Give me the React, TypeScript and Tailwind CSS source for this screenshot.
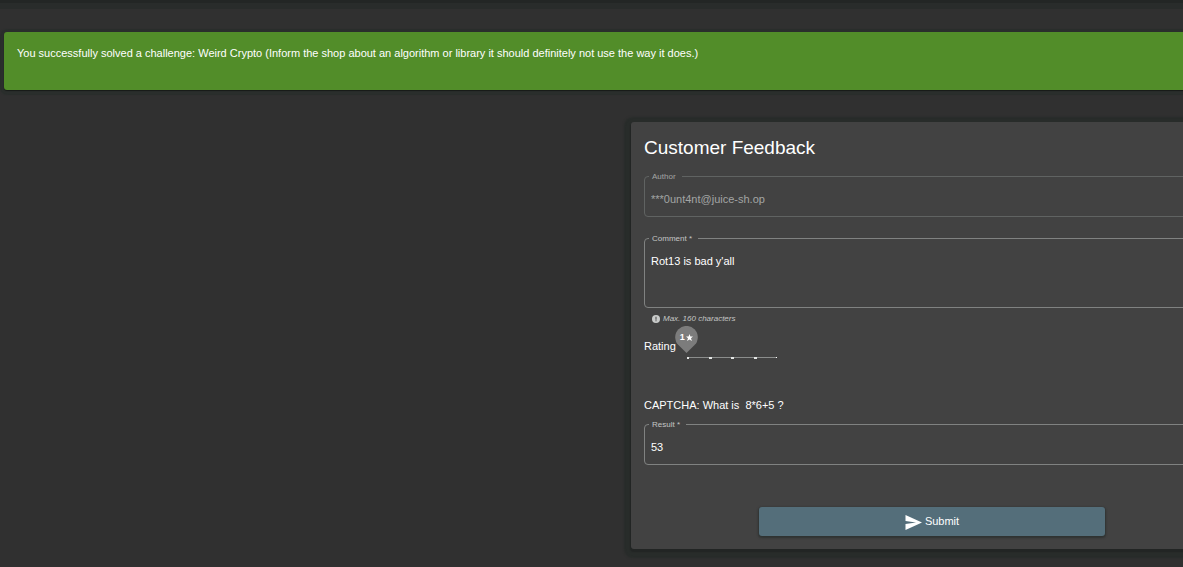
import type { ReactNode } from "react";

type FieldProps = {
  id: string;
  label: string;
  muted?: boolean;
  children: ReactNode;
};

function Field({ id, label, muted, children }: FieldProps) {
  return (
    <fieldset
      className={`min-w-0 rounded border pl-[6px] pr-2 ${muted ? "border-[#606362]" : "border-[#808281]"}`}
    >
      <legend
        className={`-ml-[2px] flex pl-[3px] pr-[6px] pt-[2px] text-[8px] leading-[8px] ${muted ? "text-[#a3a5a4]" : "text-[#c4c6c5]"}`}
      >
        <label htmlFor={id}>{label}</label>
      </legend>
      {children}
    </fieldset>
  );
}

function RatingSlider() {
  return (
    <div className="relative h-8 w-[90px]">
      <svg className="absolute inset-x-0 bottom-0 h-[3px] w-[90px]" viewBox="0 0 90 3" aria-hidden="true">
        <rect x="0" y="1" width="90" height="1" fill="#8b8d8c" />
        <rect x="0" y="1" width="2" height="2" fill="#e4e6e5" />
        <rect x="22" y="1" width="3" height="2" fill="#e4e6e5" />
        <rect x="44" y="1" width="3" height="2" fill="#e4e6e5" />
        <rect x="67" y="1" width="3" height="2" fill="#e4e6e5" />
        <rect x="89" y="1" width="1" height="1" fill="#ffffff" />
      </svg>
      <input
        id="rating"
        type="range"
        min="1"
        max="5"
        defaultValue="1"
        className="absolute inset-x-0 bottom-0 m-0 h-2 w-full opacity-0"
      />
      <div className="absolute -left-3 -top-px h-[27px] w-[23px]">
        <svg className="h-full w-full" viewBox="0 0 23 27" aria-hidden="true">
          <path d="M11.5 27L3.4 19.1A11.3 11.3 0 1 1 19.6 19.1Z" fill="#7c7c7c" />
        </svg>
        <span className="absolute inset-x-0 top-[6px] flex items-center justify-center gap-px text-[9px] font-bold leading-[10px] text-white">
          1
          <svg className="h-[7px] w-[7px]" viewBox="0 0 24 24" aria-hidden="true">
            <path
              d="M12 0l3.2 8.400 8.800.5-6.900 5.600 3.300 9.500L12 18.500 3.600 24l3.300-9.500L0 8.900l8.800-.5z"
              fill="#fff"
            />
          </svg>
        </span>
      </div>
    </div>
  );
}

export default function App() {
  return (
    <div className="min-h-screen overflow-hidden bg-[#303030] font-['Liberation_Sans',Arial,sans-serif] text-[11px] leading-4 text-white">
      <div className="h-[9px] border-t-[3px] border-[#232625] bg-[#292c2b]" />

      <div className="-mr-2 ml-1 mt-[23px] h-[58px] rounded-[3px] bg-[#528d29] px-[13px] pt-[13px] shadow-[0_1px_1px_#171a18,0_1px_1px_4px_#2a2e2c]">
        <p className="whitespace-nowrap">
          You successfully solved a challenge: Weird Crypto (Inform the shop about an algorithm or library it should
          definitely not use the way it does.)
        </p>
      </div>

      <main className="-mr-[50px] mt-8 flex justify-end pb-[18px]">
        <form
          onSubmit={(event) => event.preventDefault()}
          className="flex w-[602px] flex-col rounded-[3px] bg-[#424242] p-[13px] shadow-[0_2px_1px_1px_#222524,0_2px_2px_7px_#282c2a]"
        >
          <h1 className="pt-px text-[19px] leading-6">Customer Feedback</h1>

          <div className="mt-[11px]">
            <Field id="author" label="Author" muted>
              <input
                id="author"
                type="text"
                disabled
                defaultValue="***0unt4nt@juice-sh.op"
                className="block h-[35px] w-full bg-transparent pt-px text-[#a3a5a4] outline-none"
              />
            </Field>
          </div>

          <div className="mt-4">
            <Field id="comment" label="Comment *">
              <textarea
                id="comment"
                defaultValue="Rot13 is bad y'all"
                className="block h-16 w-full resize-none bg-transparent pt-[10px] leading-4 outline-none"
              />
            </Field>
          </div>

          <p className="mt-[5px] flex items-center gap-[3px] pl-2 text-[8px] italic leading-3 text-[#c4c6c5]">
            <svg className="h-2 w-2" viewBox="0 0 24 24" aria-hidden="true">
              <circle cx="12" cy="12" r="12" fill="#c9cbca" />
              <path d="M10.500 5h3v9h-3zM10.500 16h3v3h-3z" fill="#424242" />
            </svg>
            Max. 160 characters
          </p>

          <div className="mt-[2px] flex items-end gap-[11px]">
            <label htmlFor="rating" className="pb-[5px]">
              Rating
            </label>
            <RatingSlider />
          </div>

          <div className="mt-[38px] flex gap-[3px]">
            <label htmlFor="captcha">CAPTCHA:</label>
            <span className="whitespace-pre">What is  8*6+5 ?</span>
          </div>

          <div className="mt-[6px]">
            <Field id="captcha" label="Result *">
              <input
                id="captcha"
                type="text"
                defaultValue="53"
                className="block h-[35px] w-full bg-transparent pt-px outline-none"
              />
            </Field>
          </div>

          <button
            type="submit"
            className="mt-[42px] flex h-[29px] w-[346px] items-center justify-center gap-[3px] self-center rounded-[3px] bg-[#546e7a] pb-px shadow-[0_1px_2px_1px_#2f3332]"
          >
            <svg className="mt-px h-4 w-[17px]" viewBox="0 0 17 16" aria-hidden="true">
              <path d="M0.500 1L17 8.500L0.500 16V10L11 8.500L0.500 7Z" fill="#fff" />
            </svg>
            Submit
          </button>
        </form>
      </main>
    </div>
  );
}
